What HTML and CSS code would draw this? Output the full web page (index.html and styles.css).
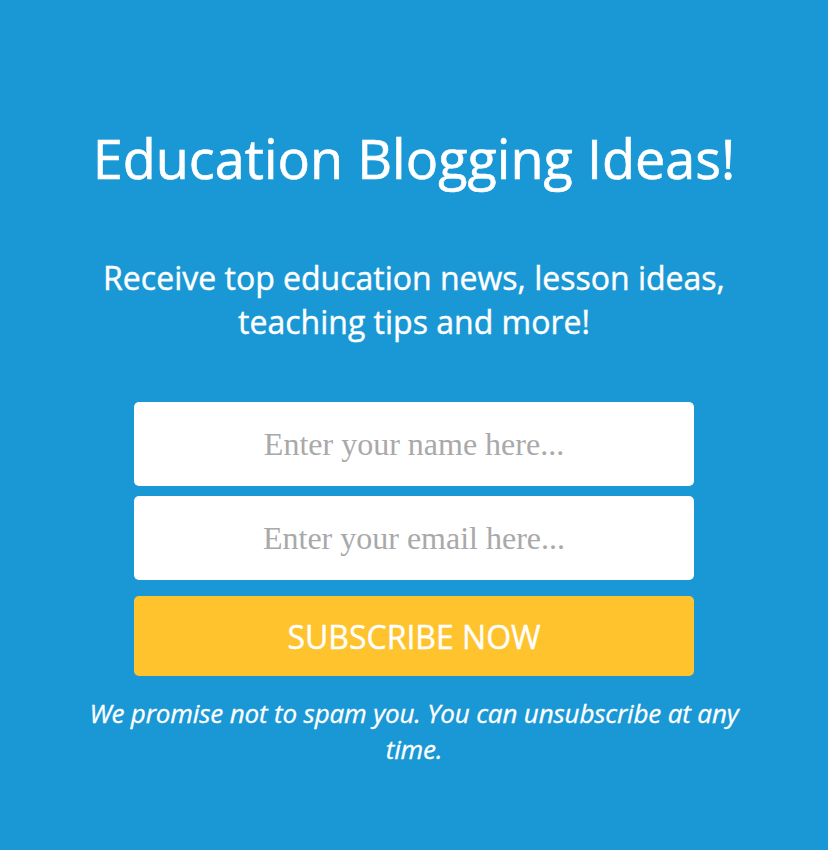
FILE: index.html
```html
<!DOCTYPE html>
<html lang="en">
<head>
<meta charset="utf-8">
<title>Education Blogging Ideas!</title>
<link rel="stylesheet" href="styles.css">
</head>
<body>
<main class="optin">
  <h1 class="optin-title">Education Blogging Ideas!</h1>
  <p class="optin-lead">Receive top education news, lesson ideas,<br>teaching tips and more!</p>
  <form class="optin-form">
    <input class="optin-field" type="text" placeholder="Enter your name here...">
    <input class="optin-field" type="email" placeholder="Enter your email here...">
    <button class="optin-button" type="button">Subscribe Now</button>
  </form>
  <p class="optin-note">We promise not to spam you. You can unsubscribe at any time.</p>
</main>
</body>
</html>
```

FILE: styles.css
```css
html, body {
  margin: 0;
  padding: 0;
}

body {
  background: #1a98d5;
  font-family: "Open Sans", "Liberation Sans", sans-serif;
  color: #ffffff;
}

.optin {
  width: 828px;
  height: 850px;
  box-sizing: border-box;
  padding-top: 126px;
  display: flex;
  flex-direction: column;
  align-items: center;
  text-align: center;
}

.optin-title {
  margin: 0;
  font-size: 54px;
  font-weight: 500;
  line-height: 64px;
  -webkit-text-stroke: 0.6px #ffffff;
}

.optin-lead {
  margin: 66px 0 0;
  font-size: 32px;
  font-weight: 500;
  line-height: 44px;
  -webkit-text-stroke: 0.4px #ffffff;
}

.optin-form {
  margin-top: 58px;
  width: 560px;
  display: flex;
  flex-direction: column;
}

.optin-field {
  height: 84px;
  box-sizing: border-box;
  border: none;
  border-radius: 5px;
  background: #ffffff;
  font-family: "Liberation Serif", "Times New Roman", serif;
  font-size: 32px;
  text-align: center;
  color: #333333;
  outline: none;
  padding: 0 12px;
  margin: 0 0 10px;
}

.optin-field::placeholder {
  color: #a9a9a9;
  opacity: 1;
}

.optin-button {
  margin-top: 6px;
  height: 80px;
  border: none;
  border-radius: 5px;
  background: #ffc32d;
  color: #ffffff;
  font-family: "Open Sans", "Liberation Sans", sans-serif;
  font-size: 32px;
  font-weight: 500;
  text-transform: uppercase;
  -webkit-text-stroke: 0.4px #ffffff;
  cursor: pointer;
}

.optin-note {
  margin: 19px 0 0;
  width: 660px;
  font-size: 26px;
  font-style: italic;
  font-weight: 500;
  line-height: 36px;
  letter-spacing: -0.15px;
  -webkit-text-stroke: 0.3px #ffffff;
}
```
